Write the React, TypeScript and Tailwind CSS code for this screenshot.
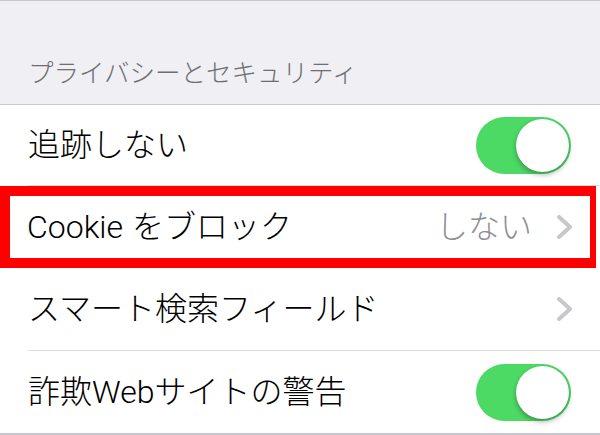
const font = { fontFamily: '"Liberation Sans", "Noto Sans CJK JP", sans-serif' };
const latin = { fontFamily: 'Roboto, "Liberation Sans", sans-serif' };

function Toggle() {
  return (
    <div className="relative h-[57px] w-[95px] rounded-full bg-[#4cd964]">
      <div className="absolute right-[2px] top-[2px] h-[53px] w-[53px] rounded-full bg-white shadow-[0_3px_5px_rgba(0,0,0,0.28),0_0_1px_rgba(0,0,0,0.2)]" />
    </div>
  );
}

function Chevron() {
  return (
    <svg width="18" height="24" viewBox="0 0 18 24" className="shrink-0">
      <path d="M3 2 L14 12 L3 22" fill="none" stroke="#c7c7cc" strokeWidth="4" strokeLinecap="round" strokeLinejoin="round" />
    </svg>
  );
}

export default function App() {
  return (
    <div className="h-[435px] w-[600px] overflow-hidden bg-[#efeff4] font-light text-black" style={font}>
      <div className="h-px bg-[#c8c7cc]" />
      <div className="flex h-[103px] items-end px-[28px] pb-[16px] text-[25.5px] leading-[30px] text-[#6d6d72]">
        プライバシーとセキュリティ
      </div>
      <div className="h-px bg-[#c8c7cc]" />
      <div className="bg-white text-[32px] leading-[40px]">
        <div className="ml-[28px] flex h-[81px] items-center justify-between border-b border-[#dcdce0] pr-[29px]">
          <span>追跡しない</span>
          <Toggle />
        </div>
        <div className="h-[82px]">
          <div className="flex h-full w-[596px] items-center justify-between border-y-[10px] border-l-[10px] border-r-[6px] border-[#ff0000] pl-[17px] pr-[16px]">
            <span>
              <span style={latin}>Cookie</span> をブロック
            </span>
            <div className="flex items-center gap-[24px]">
              <span className="text-[#8e8e93]">しない</span>
              <Chevron />
            </div>
          </div>
        </div>
        <div className="ml-[28px] flex h-[83px] items-center justify-between border-b border-[#dcdce0] pr-[26px]">
          <span>スマート検索フィールド</span>
          <Chevron />
        </div>
        <div className="ml-[28px] flex h-[82px] items-center justify-between pr-[29px]">
          <span>
            詐欺<span style={latin}>Web</span>サイトの警告
          </span>
          <Toggle />
        </div>
      </div>
      <div className="h-[2px] bg-[#c8c7cc]" />
    </div>
  );
}
